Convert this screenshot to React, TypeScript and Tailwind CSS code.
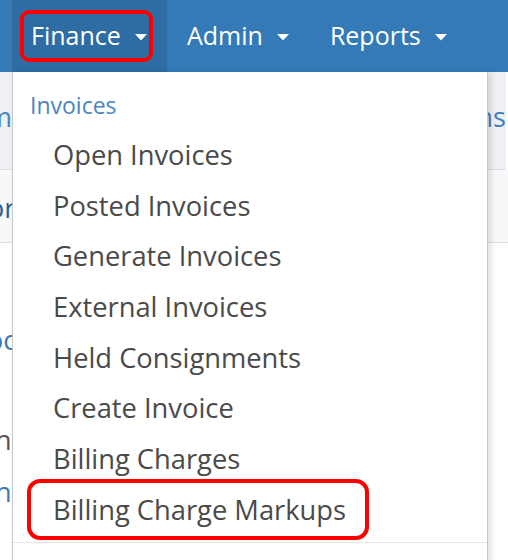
import React from "react";

const items = [
  "Open Invoices",
  "Posted Invoices",
  "Generate Invoices",
  "External Invoices",
  "Held Consignments",
  "Create Invoice",
  "Billing Charges",
  "Billing Charge Markups",
];

function Caret() {
  return (
    <svg width="12" height="7" viewBox="0 0 12 7" className="ml-[14px] mt-[3px]">
      <path d="M0 0 L12 0 L6 6.5 Z" fill="white" />
    </svg>
  );
}

export default function App() {
  return (
    <div
      className="relative w-[508px] h-[560px] overflow-hidden bg-white"
      style={{ fontFamily: '"Open Sans", "Noto Sans", sans-serif' }}
    >
      {/* navbar */}
      <nav className="h-[72px] bg-[#337ab7] flex items-stretch pl-[12px] text-white text-[25px]">
        <div className="relative flex items-center w-[155px] pl-[19px] bg-[#2e6da4]">
          Finance
          <Caret />
          <span className="absolute left-[8px] top-[10px] w-[133px] h-[52px] border-[4px] border-[#ff0000] rounded-[9px]" />
        </div>
        <div className="flex items-center pl-[20px] pr-[21px]">
          Admin
          <Caret />
        </div>
        <div className="flex items-center pl-[20px]">
          Reports
          <Caret />
        </div>
      </nav>

      {/* page behind the menu */}
      <div className="text-[27px] leading-[34px]">
        <div className="h-[98px] bg-[#eef0f3] border-b border-[#dcdfe3] flex items-center justify-between -ml-[13px] mr-[2px] pb-[8px]">
          <span className="text-[#4a86c0]">m</span>
          <span className="text-[#3f7fbf]">ns</span>
        </div>
        <div className="h-[73px] bg-[#f7f8f9] border-b border-[#dcdfe3] flex items-center -ml-[12px] pt-[4px]">
          <span className="text-[#2b5f93]">or</span>
        </div>
        <div className="flex flex-col items-start -ml-[13px] pt-[80px]">
          <span className="text-[#3c78b4]">oc</span>
          <span className="mt-[66px] ml-[8px] text-[#555]">n</span>
          <span className="mt-[18px] ml-[8px] text-[#3c78b4]">n</span>
        </div>
      </div>

      {/* dropdown */}
      <div className="absolute left-[12px] top-[72px] w-[476px] h-[500px] bg-white border-x border-[#c8c8c8] shadow-[3px_0_6px_rgba(0,0,0,0.12)] pt-[8px]">
        <div className="h-[50px] flex items-center pl-[17px] text-[23px] text-[#4a86c0]">
          Invoices
        </div>
        {items.map((it, i) => (
          <div
            key={it}
            className="relative h-[50.7px] flex items-center pl-[40px] text-[27.3px] text-[#4a4a4a]"
          >
            {it}
            {i === items.length - 1 && (
              <span className="absolute left-[14px] top-[-6px] w-[342px] h-[61px] border-[4px] border-[#ff0000] rounded-[13px]" />
            )}
          </div>
        ))}
        <div className="mt-[6px] h-px bg-[#e5e5e5]" />
      </div>
    </div>
  );
}
